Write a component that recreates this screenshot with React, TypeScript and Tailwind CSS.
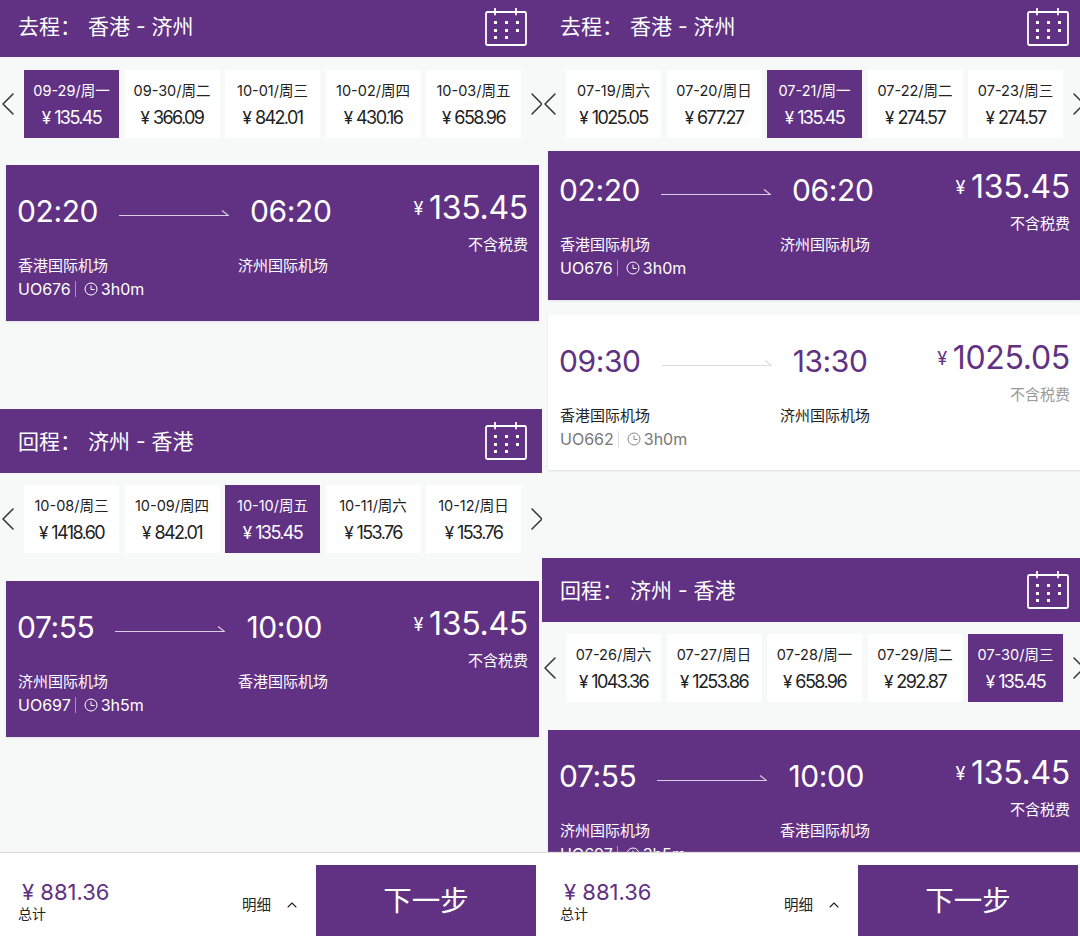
import { ChevronLeft, ChevronRight, ChevronUp } from "lucide-react";

const font = { fontFamily: '"Inter", "Noto Sans CJK SC", sans-serif' };

type Day = { date: string; price: string; active?: boolean };

const CalendarIcon = () => (
  <svg width="42" height="38" viewBox="0 0 42 38" fill="none" stroke="white" strokeWidth="1.8">
    <rect x="1" y="4" width="40" height="33" rx="1.5" />
    <path d="M10 0.5v6M31 0.5v6" strokeLinecap="round" />
    <g fill="white" stroke="none">
      <rect x="9" y="13" width="3" height="3" />
      <rect x="20" y="13" width="3" height="3" />
      <rect x="31" y="13" width="3" height="3" />
      <rect x="9" y="21" width="3" height="3" />
      <rect x="20" y="21" width="3" height="3" />
      <rect x="31" y="21" width="3" height="3" />
      <rect x="9" y="28" width="3" height="3" />
      <rect x="20" y="28" width="3" height="3" />
    </g>
  </svg>
);

const Header = ({ label, route, className }: { label: string; route: string; className: string }) => (
  <div className={`flex items-center justify-between bg-[#613183] pl-[18px] pr-[15px] text-white ${className}`}>
    <div className="flex items-center text-[21px] leading-none">
      <span className="w-[70px]">{label}</span>
      <span>{route}</span>
    </div>
    <CalendarIcon />
  </div>
);

const DateRow = ({ days, className }: { days: Day[]; className: string }) => (
  <div className={`flex h-[68px] items-center ${className}`}>
    <ChevronLeft className="ml-[-12.5px] h-[40px] w-[40px] shrink-0 text-[#333]" strokeWidth={0.9} />
    <div className="ml-[-3.5px] flex shrink-0 gap-[5.5px]">
      {days.map((d) => (
        <div
          key={d.date}
          className={`flex h-[68px] w-[95px] flex-col items-center pt-[12px] ${
            d.active ? "bg-[#613183] text-white" : "bg-white text-[#222]"
          }`}
        >
          <div className="text-[14.5px] leading-[18px]">{d.date}</div>
          <div className="mt-[8px] text-[18px] leading-[20px]">
            <span className="mr-[3px] text-[17px]">¥</span>
            <span className="tracking-[-1.6px]">{d.price}</span>
          </div>
        </div>
      ))}
    </div>
    <ChevronRight className="ml-[-4.5px] h-[40px] w-[40px] shrink-0 text-[#333]" strokeWidth={0.9} />
  </div>
);

const Arrow = ({ color }: { color: string }) => (
  <svg width="110" height="8" viewBox="0 0 110 8" fill="none" stroke={color} strokeWidth="1.2" className="mt-[4px] shrink-0">
    <path d="M0 6.5h109.5L103 1.5" />
  </svg>
);

const ClockIcon = ({ color }: { color: string }) => (
  <svg width="14" height="14" viewBox="0 0 14 14" fill="none" stroke={color} strokeWidth="1">
    <circle cx="7" cy="7" r="6" />
    <path d="M7 3.5V7.5H10.5" />
  </svg>
);

type Flight = {
  from: string;
  to: string;
  dep: string;
  arr: string;
  price: string;
  no: string;
  dur: string;
  active: boolean;
};

const FlightCard = ({ f, className }: { f: Flight; className: string }) => (
  <div
    className={`flex justify-between pl-[12px] pr-[11px] shadow-[0_1px_2px_rgba(0,0,0,0.1)] ${
      f.active ? "bg-[#613183] text-white" : "bg-white text-[#613183]"
    } ${className}`}
  >
    <div>
      <div className="ml-[-1px] flex items-center gap-[21px] text-[30px] leading-[40px] tracking-[-0.4px]">
        <span>{f.dep}</span>
        <Arrow color={f.active ? "#d9cfe2" : "#dddddd"} />
        <span>{f.arr}</span>
      </div>
      <div className={`mt-[26px] flex text-[15px] leading-[18px] ${f.active ? "text-white" : "text-[#222]"}`}>
        <span className="w-[220px]">{f.from}</span>
        <span>{f.to}</span>
      </div>
      <div className={`mt-[4px] flex items-center text-[16px] leading-[20px] ${f.active ? "text-white" : "text-[#777]"}`}>
        <span>{f.no}</span>
        <span className={`mx-[4px] h-[16px] w-px ${f.active ? "bg-[#a98fbe]" : "bg-[#ddd]"}`} />
        <span className="mr-[3px] ml-[4px]">
          <ClockIcon color={f.active ? "white" : "#888888"} />
        </span>
        <span>{f.dur}</span>
      </div>
    </div>
    <div className="text-right">
      <div className="mt-[-3px] text-[32px] leading-[40px] tracking-[-0.3px]">
        <span className="mr-[6px] align-[4px] text-[18px]">¥</span>
        {f.price}
      </div>
      <div className={`mt-[7px] text-[15px] leading-[18px] ${f.active ? "text-white" : "text-[#999]"}`}>不含税费</div>
    </div>
  </div>
);

const Footer = () => (
  <div className="relative flex h-[83px] shrink-0 justify-between bg-white shadow-[0_-1px_1px_#dcdcdc]">
    <div className="h-full pl-[18px] pt-[26px]">
      <div className="ml-[4px] mt-[1px] text-[22px] leading-[24px] text-[#613183]">¥ 881.36</div>
      <div className="mt-[1px] text-[14px] leading-[18px] text-[#222]">总计</div>
    </div>
    <div className="flex h-full items-center">
      <div className="mr-[16px] mt-[20px] flex items-center gap-[13px] text-[14.5px] text-[#222]">
        <span>明细</span>
        <ChevronUp className="h-[16px] w-[16px]" strokeWidth={1.6} />
      </div>
      <div className="mr-[6px] mt-[12px] flex h-[71px] w-[220px] items-center justify-center bg-[#613183] pt-[2px] text-[28.5px] text-white">
        下一步
      </div>
    </div>
  </div>
);

const leftOut: Day[] = [
  { date: "09-29/周一", price: "135.45", active: true },
  { date: "09-30/周二", price: "366.09" },
  { date: "10-01/周三", price: "842.01" },
  { date: "10-02/周四", price: "430.16" },
  { date: "10-03/周五", price: "658.96" },
];
const leftBack: Day[] = [
  { date: "10-08/周三", price: "1418.60" },
  { date: "10-09/周四", price: "842.01" },
  { date: "10-10/周五", price: "135.45", active: true },
  { date: "10-11/周六", price: "153.76" },
  { date: "10-12/周日", price: "153.76" },
];
const rightOut: Day[] = [
  { date: "07-19/周六", price: "1025.05" },
  { date: "07-20/周日", price: "677.27" },
  { date: "07-21/周一", price: "135.45", active: true },
  { date: "07-22/周二", price: "274.57" },
  { date: "07-23/周三", price: "274.57" },
];
const rightBack: Day[] = [
  { date: "07-26/周六", price: "1043.36" },
  { date: "07-27/周日", price: "1253.86" },
  { date: "07-28/周一", price: "658.96" },
  { date: "07-29/周二", price: "292.87" },
  { date: "07-30/周三", price: "135.45", active: true },
];

const hkg = "香港国际机场";
const tna = "济州国际机场";
const out676: Flight = { from: hkg, to: tna, dep: "02:20", arr: "06:20", price: "135.45", no: "UO676", dur: "3h0m", active: true };
const out662: Flight = { from: hkg, to: tna, dep: "09:30", arr: "13:30", price: "1025.05", no: "UO662", dur: "3h0m", active: false };
const back697: Flight = { from: tna, to: hkg, dep: "07:55", arr: "10:00", price: "135.45", no: "UO697", dur: "3h5m", active: true };

export default function App() {
  return (
    <div style={font} className="flex h-[936px] w-[1080px] overflow-hidden bg-[#f7f8f8]">
      {/* 左边一屏 */}
      <div className="flex h-full w-[542px] shrink-0 flex-col overflow-hidden">
        <div className="min-h-0 flex-1 overflow-hidden">
          <Header label="去程：" route="香港 - 济州" className="h-[57px] pb-[4px]" />
          <DateRow days={leftOut} className="mt-[13px]" />
          <div className="ml-[6px] mt-[27px] mr-[3px]">
            <FlightCard f={out676} className="h-[156px] pt-[26px]" />
          </div>
          <Header label="回程：" route="济州 - 香港" className="mt-[88px] h-[64px]" />
          <DateRow days={leftBack} className="mt-[12px]" />
          <div className="ml-[6px] mt-[28px] mr-[3px]">
            <FlightCard f={back697} className="h-[156px] pt-[26px]" />
          </div>
        </div>
        <Footer />
      </div>

      {/* 右边一屏 */}
      <div className="flex h-full w-[538px] shrink-0 flex-col overflow-hidden">
        <div className="min-h-0 w-[542px] flex-1 overflow-hidden">
          <Header label="去程：" route="香港 - 济州" className="h-[57px] pb-[4px]" />
          <DateRow days={rightOut} className="mt-[13px]" />
          <div className="ml-[6px] mt-[13px] mr-[3px]">
            <FlightCard f={out676} className="h-[149px] pt-[19px]" />
            <FlightCard f={out662} className="mt-[15px] h-[155px] pt-[26px]" />
          </div>
          <Header label="回程：" route="济州 - 香港" className="mt-[88px] h-[64px]" />
          <DateRow days={rightBack} className="mt-[12px]" />
          <div className="ml-[6px] mt-[28px] mr-[3px]">
            <FlightCard f={back697} className="h-[156px] pt-[26px]" />
          </div>
        </div>
        <div className="w-[542px]">
          <Footer />
        </div>
      </div>
    </div>
  );
}
